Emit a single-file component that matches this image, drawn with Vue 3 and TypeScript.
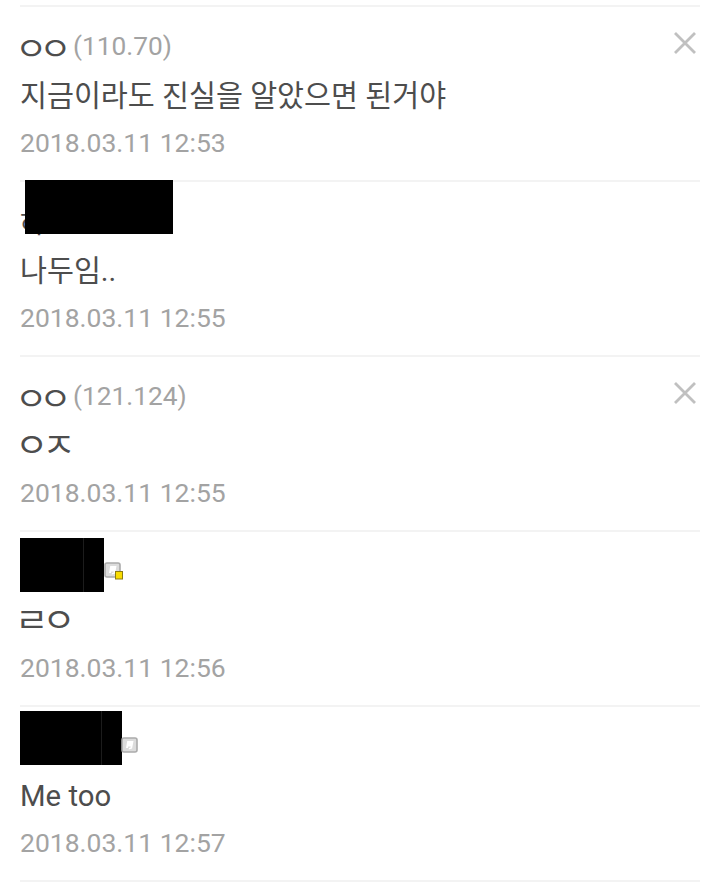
<script setup lang="ts">
interface Comment {
  name: string
  ip?: string
  text: string
  date: string
  jamo?: boolean
  removable?: boolean
  badge?: 'plain' | 'fixed'
  mask?: 'a' | 'b' | 'c'
}

const comments: Comment[] = [
  { name: 'ㅇㅇ', ip: '(110.70)', text: '지금이라도 진실을 알았으면 된거야', date: '2018.03.11 12:53', removable: true },
  { name: '하', text: '나두임..', date: '2018.03.11 12:55', mask: 'a' },
  { name: 'ㅇㅇ', ip: '(121.124)', text: 'ㅇㅈ', date: '2018.03.11 12:55', removable: true, jamo: true },
  { name: '', text: 'ㄹㅇ', date: '2018.03.11 12:56', mask: 'b', badge: 'fixed', jamo: true },
  { name: '', text: 'Me too', date: '2018.03.11 12:57', mask: 'c', badge: 'plain' },
]
</script>

<template>
  <div class="list">
    <div v-for="(c, i) in comments" :key="i" class="row">
      <div class="head">
        <span class="name" :class="{ wide: c.ip }">{{ c.name }}</span>
        <span v-if="c.ip" class="ip">{{ c.ip }}</span>
        <span v-if="c.mask" class="mask" :class="c.mask"></span>
        <svg v-if="c.badge" class="badge" :class="c.mask" width="19" height="18" viewBox="0 0 19 18">
          <rect x="1" y="1" width="15" height="14" rx="2" fill="#dcdcdc" stroke="#ababab" stroke-width="1.6" />
          <path d="M5 11l1.2-7h6.3l-1.4 7.5-3.4 1 .3-1.6 1.6-.3.2-1H7.2l-.2 1.4z" fill="#fff" />
          <rect v-if="c.badge === 'fixed'" x="11.5" y="9.5" width="7" height="7.5" fill="#f9dc00" stroke="#8d7c12" stroke-width="1" />
        </svg>
      </div>
      <div class="text"><span :class="{ wide: c.jamo }">{{ c.text }}</span></div>
      <div class="date">{{ c.date }}</div>
      <svg v-if="c.removable" class="close" width="24" height="24" viewBox="0 0 24 24">
        <path d="M2 2l20 20M22 2L2 22" stroke="#c0c0c0" stroke-width="2.8" fill="none" />
      </svg>
    </div>
    <div class="end"></div>
  </div>
</template>

<style>
html,
body {
  background: #fff;
}
</style>

<style scoped>
.list {
  width: 720px;
  height: 894px;
  box-sizing: border-box;
  padding: 5px 20px 0;
  overflow: hidden;
  font-family: Roboto, "Noto Sans CJK KR", sans-serif;
}
.row {
  position: relative;
  height: 175px;
  box-sizing: border-box;
  border-top: 2px solid #f3f3f3;
}
.end {
  border-top: 2px solid #f3f3f3;
}
.head {
  padding-top: 19px;
  height: 40px;
  display: flex;
  align-items: center;
  white-space: nowrap;
}
.name {
  font-size: 27px;
  color: #4d4d4d;
  font-family: "Noto Sans CJK KR", sans-serif;
}
.wide {
  display: inline-block;
  transform-origin: left center;
}
.name.wide {
  font-size: 32px;
  letter-spacing: -7.5px;
  transform: scaleX(1.1);
  width: 58px;
  margin-left: -5px;
}
.ip {
  font-size: 26.3px;
  color: #a3a3a3;
}
.text {
  margin-top: 10px;
  height: 40px;
  line-height: 40px;
  font-size: 29.3px;
  color: #4d4d4d;
  white-space: nowrap;
}
.text .wide {
  font-size: 33px;
  letter-spacing: -5.5px;
  transform: scaleX(1.1);
  margin-left: -5px;
}
.date {
  margin-top: 7px;
  height: 40px;
  line-height: 40px;
  font-size: 26.5px;
  color: #a3a3a3;
  white-space: nowrap;
}
.close {
  position: absolute;
  right: 3px;
  top: 24px;
}
.mask {
  position: absolute;
  background: #000;
  height: 54px;
}
.mask.a {
  left: 5px;
  width: 148px;
  top: -2px;
}
.mask.b {
  left: 0;
  width: 84px;
  top: 6px;
  background: linear-gradient(90deg, #000 63px, #1c1c1c 63px, #1c1c1c 64px, #000 64px);
}
.mask.c {
  left: 0;
  width: 102px;
  top: 4px;
  background: linear-gradient(90deg, #000 81px, #1c1c1c 81px, #1c1c1c 82px, #000 82px);
}
.badge {
  position: absolute;
}
.badge.b {
  left: 84px;
  top: 30px;
}
.badge.c {
  left: 101px;
  top: 30px;
}
</style>
